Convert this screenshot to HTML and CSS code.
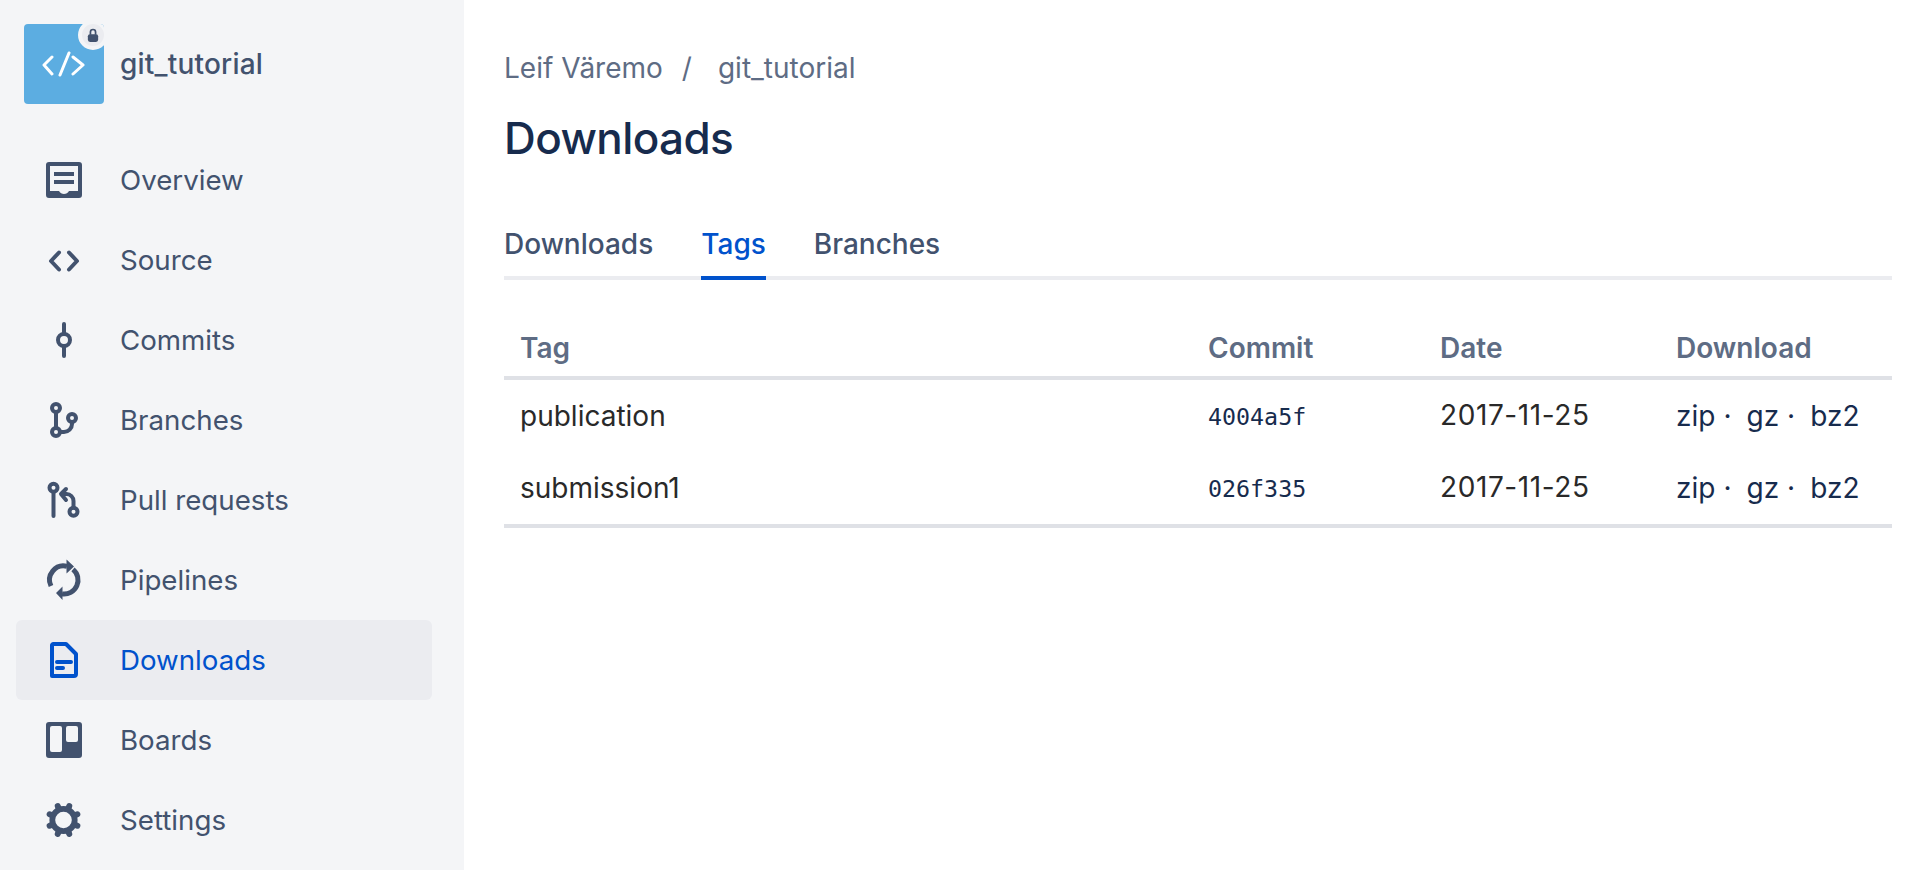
FILE: index.html
```html
<!DOCTYPE html>
<html lang="en">
<head>
<meta charset="utf-8">
<title>Downloads</title>
<link rel="stylesheet" href="styles.css">
</head>
<body>
<div class="page">
  <aside class="sidebar">
    <div class="repo">
      <div class="avatar">
        <svg class="avatar-code" viewBox="0 0 44 26"><path d="M10 6 2 14l8 9M31 6l10 8-10 9M27 2 18 24"/></svg>
        <span class="lock">
          <svg viewBox="0 0 14 16"><path class="lock-bar" d="M4 7V4a3 3 0 0 1 6 0v3"/><rect class="lock-body" x="1" y="6.500" width="12" height="9" rx="2.500"/></svg>
        </span>
      </div>
      <span class="repo-name">git_tutorial</span>
    </div>
    <nav class="nav">
      <a class="nav-item">
        <svg class="icon" viewBox="0 0 36 36"><path class="fill" fill-rule="evenodd" d="M3 0h30a3 3 0 0 1 3 3v30a3 3 0 0 1-3 3H3a3 3 0 0 1-3-3V3a3 3 0 0 1 3-3ZM4 4v25h9c1 2 3 3 5 3s4-1 5-3h9V4ZM8 10h20v4H8Zm0 8h20v4H8Z"/></svg>
        <span>Overview</span>
      </a>
      <a class="nav-item">
        <svg class="icon" viewBox="0 0 36 36"><path class="line" d="M13 10.500 5 19l8 8.500M23 10.500l8 8.500-8 8.500"/></svg>
        <span>Source</span>
      </a>
      <a class="nav-item">
        <svg class="icon" viewBox="0 0 36 36"><circle class="line" cx="18" cy="18" r="6"/><path class="line" d="M18 2v10M18 24v10"/></svg>
        <span>Commits</span>
      </a>
      <a class="nav-item">
        <svg class="icon" viewBox="0 0 36 36"><circle class="line" cx="10" cy="6" r="4"/><circle class="line" cx="10" cy="30" r="4"/><circle class="line" cx="26" cy="16" r="4"/><path class="line" d="M10 10v16M26 20v2a8 8 0 0 1-8 8h-4"/></svg>
        <span>Branches</span>
      </a>
      <a class="nav-item">
        <svg class="icon" viewBox="0 0 36 36"><circle class="line" cx="7.500" cy="5.700" r="4"/><circle class="line" cx="27.500" cy="29.700" r="4"/><path class="line" d="M7.500 10v24M27.500 25.500V19a7 7 0 0 0-7-7H16"/><path class="line" d="M20 7l-5 5 5 6"/></svg>
        <span>Pull requests</span>
      </a>
      <a class="nav-item">
        <svg class="icon" viewBox="0 0 36 36"><path class="line-butt" d="M5 24A14 14 0 0 1 21 4.300M27 7.300A14 14 0 0 1 16 31.900"/><path class="fill" d="M20.500-2.500 28 4.500l-7.500 7ZM16.500 24.500 10 31l6.500 7Z"/></svg>
        <span>Pipelines</span>
      </a>
      <a class="nav-item active">
        <svg class="icon" viewBox="0 0 36 36"><path class="line" d="M7 2h13l10 10v20a2 2 0 0 1-2 2H6V3Z"/><path class="line" d="M11 20h14M11 26h6"/></svg>
        <span>Downloads</span>
      </a>
      <a class="nav-item">
        <svg class="icon" viewBox="0 0 36 36"><path class="fill" fill-rule="evenodd" d="M3 0h30a3 3 0 0 1 3 3v30a3 3 0 0 1-3 3H3a3 3 0 0 1-3-3V3a3 3 0 0 1 3-3ZM6 4a2 2 0 0 0-2 2v22a2 2 0 0 0 2 2h8a2 2 0 0 0 2-2V6a2 2 0 0 0-2-2Zm16 0a2 2 0 0 0-2 2v12a2 2 0 0 0 2 2h8a2 2 0 0 0 2-2V6a2 2 0 0 0-2-2Z"/></svg>
        <span>Boards</span>
      </a>
      <a class="nav-item">
        <svg class="icon" viewBox="0 0 36 36"><circle class="gear-ring" cx="17.500" cy="18" r="11.200"/><path class="gear-teeth" d="M3.640 12.260 31.360 23.740M11.760 4.140 23.240 31.860M23.240 4.140 11.760 31.860M31.360 12.260 3.640 23.740"/></svg>
        <span>Settings</span>
      </a>
    </nav>
  </aside>
  <main class="main">
    <div class="crumbs"><span>Leif Väremo</span><span class="sep">/</span><span>git_tutorial</span></div>
    <h1 class="title">Downloads</h1>
    <div class="tabs">
      <a class="tab">Downloads</a>
      <a class="tab current">Tags</a>
      <a class="tab">Branches</a>
    </div>
    <table class="tags">
      <thead>
        <tr><th class="c-tag">Tag</th><th class="c-commit">Commit</th><th class="c-date">Date</th><th class="c-dl">Download</th></tr>
      </thead>
      <tbody>
        <tr><td>publication</td><td class="hash">4004a5f</td><td class="date">2017-11-25</td><td class="dl"><a>zip</a><i>·</i><a>gz</a><i>·</i><a>bz2</a></td></tr>
        <tr><td>submission1</td><td class="hash">026f335</td><td class="date">2017-11-25</td><td class="dl"><a>zip</a><i>·</i><a>gz</a><i>·</i><a>bz2</a></td></tr>
      </tbody>
    </table>
  </main>
</div>
</body>
</html>
```
FILE: styles.css
```css
* { box-sizing: border-box; }
html, body { margin: 0; height: 100%; background: #fff; overflow: hidden; }
body { font-family: Inter, "Liberation Sans", sans-serif; color: #172b4d; }
.page { display: flex; height: 870px; }

.sidebar { width: 464px; flex: none; background: #f4f5f7; padding: 24px 32px 0 16px; }
.repo { display: flex; align-items: center; gap: 16px; padding-left: 8px; height: 80px; margin-bottom: 36px; }
.avatar { position: relative; width: 80px; height: 80px; border-radius: 4px; background: #5cade1; display: flex; align-items: center; justify-content: center; overflow: hidden; flex: none; }
.avatar-code { width: 44px; height: 26px; fill: none; stroke: #fff; stroke-width: 3; stroke-linecap: round; stroke-linejoin: round; }
.lock { position: absolute; top: -4px; right: -4px; width: 30px; height: 30px; border-radius: 50%; background: #ebecf0; border: 4px solid #f4f5f7; display: flex; align-items: center; justify-content: center; }
.lock svg { width: 12px; height: 15px; }
.lock-bar { fill: none; stroke: #42526e; stroke-width: 2; }
.lock-body { fill: #42526e; }
.repo-name { font-size: 28px; font-weight: 500; letter-spacing: 0.200px; color: #42526e; }

.nav { display: flex; flex-direction: column; }
.nav-item { display: flex; align-items: center; height: 80px; padding-left: 30px; gap: 38px; border-radius: 6px; color: #42526e; font-size: 27.700px; }
.nav-item.active { background: #ebecf0; color: #0052cc; }
.icon { width: 36px; height: 36px; flex: none; overflow: visible; }
.icon .fill { fill: currentColor; }
.icon .line { fill: none; stroke: currentColor; stroke-width: 4; stroke-linecap: round; stroke-linejoin: round; }
.icon .line-butt { fill: none; stroke: currentColor; stroke-width: 5; }
.gear-ring { fill: none; stroke: currentColor; stroke-width: 5.800; }
.gear-teeth { fill: none; stroke: currentColor; stroke-width: 6; stroke-dasharray: 2 26 2; stroke-linecap: round; }

.main { flex: 1; padding: 46px 20px 0 40px; min-width: 0; }
.crumbs { display: flex; color: #5e6c84; font-size: 28px; line-height: 44px; }
.sep { margin: 0 26px 0 19px; }
.title { margin: 18px 0 0; font-size: 44px; line-height: 60px; font-weight: 500; letter-spacing: -0.600px; color: #172b4d; }
.tabs { display: flex; gap: 48px; margin-top: 34px; height: 78px; border-bottom: 4px solid #ebecf0; }
.tab { display: block; height: 78px; padding-top: 24px; font-size: 28px; line-height: 36px; font-weight: 500; color: #42526e; border-bottom: 4px solid transparent; }
.tab.current { color: #0052cc; border-bottom-color: #0052cc; }

.tags { width: 100%; border-collapse: collapse; table-layout: fixed; }
.tags th { height: 98px; padding: 40px 16px 0; text-align: left; font-size: 28px; font-weight: 600; color: #5e6c84; border-bottom: 4px solid #dfe1e6; }
.c-tag { width: 688px; }
.c-commit { width: 232px; }
.c-date { width: 236px; }
.c-dl { width: 232px; }
.tags td { height: 74px; padding: 0 16px; font-size: 28px; color: #292929; }
.tags tbody tr:last-child td { border-bottom: 4px solid #dfe1e6; }
.tags .hash { font-family: "DejaVu Sans Mono", monospace; font-size: 23.300px; color: #172b4d; }
.tags .date { letter-spacing: 0.600px; padding-bottom: 3px; }
.tags .dl { color: #172b4d; white-space: nowrap; }
.dl i { font-style: normal; margin: 0 15px 0 8px; }
```
